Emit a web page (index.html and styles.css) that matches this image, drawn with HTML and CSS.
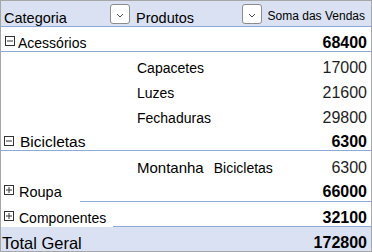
FILE: index.html
```html
<!DOCTYPE html>
<html lang="pt">
<head>
<meta charset="utf-8">
<title>Tabela dinâmica</title>
<link rel="stylesheet" href="styles.css">
</head>
<body>
<div class="pivot">
  <div class="row head line">
    <div class="hcell first">
      <span class="htitle">Categoria</span>
      <span class="dd"><svg width="8" height="5" viewBox="0 0 8 5"><path d="M1 1 L4 4 L7 1" fill="none" stroke="#4a4a4a" stroke-width="1"/></svg></span>
    </div>
    <div class="hcell">
      <span class="htitle">Produtos</span>
      <span class="dd"><svg width="8" height="5" viewBox="0 0 8 5"><path d="M1 1 L4 4 L7 1" fill="none" stroke="#4a4a4a" stroke-width="1"/></svg></span>
    </div>
    <div class="hcell">
      <span class="hsum">Soma das Vendas</span>
    </div>
  </div>

  <div class="row h24 line">
    <div class="label">
      <svg class="tog t-acc" width="10" height="10" viewBox="0 0 10 10"><rect x="0.5" y="0.5" width="9" height="9" fill="#fff" stroke="#333"/><path d="M2 5 H8" stroke="#333"/></svg>
      <span class="name n-acc">Acessórios</span>
    </div>
    <div></div>
    <div class="num b">68400</div>
  </div>

  <div class="row h25 pb1">
    <div></div>
    <div class="sub">Capacetes</div>
    <div class="num">17000</div>
  </div>
  <div class="row h25 pb1">
    <div></div>
    <div class="sub">Luzes</div>
    <div class="num">21600</div>
  </div>
  <div class="row h24">
    <div></div>
    <div class="sub">Fechaduras</div>
    <div class="num">29800</div>
  </div>

  <div class="row h24 line">
    <div class="label">
      <svg class="tog t-bic" width="10" height="10" viewBox="0 0 10 10"><rect x="0.5" y="0.5" width="9" height="9" fill="#fff" stroke="#333"/><path d="M2 5 H8" stroke="#333"/></svg>
      <span class="name n-bic">Bicicletas</span>
    </div>
    <div></div>
    <div class="num b">6300</div>
  </div>

  <div class="row h26 pb1">
    <div></div>
    <div class="sub"><span class="sub-a">Montanha</span><span class="sub-b">Bicicletas</span></div>
    <div class="num">6300</div>
  </div>

  <div class="row h24 line">
    <div class="label patch w-roupa">
      <svg class="tog t-rou" width="10" height="10" viewBox="0 0 10 10"><rect x="0.5" y="0.5" width="9" height="9" fill="#fff" stroke="#333"/><path d="M2 5 H8 M5 2 V8" stroke="#333"/></svg>
      <span class="name n-rou">Roupa</span>
    </div>
    <div></div>
    <div class="num b nb1">66000</div>
  </div>

  <div class="row h24 line">
    <div class="label patch w-comp">
      <svg class="tog t-com" width="10" height="10" viewBox="0 0 10 10"><rect x="0.5" y="0.5" width="9" height="9" fill="#fff" stroke="#333"/><path d="M2 5 H8 M5 2 V8" stroke="#333"/></svg>
      <span class="name n-com">Componentes</span>
    </div>
    <div></div>
    <div class="num b">32100</div>
  </div>

  <div class="row h24 total">
    <div class="label"><span class="name n-tot">Total Geral</span></div>
    <div></div>
    <div class="num b">172800</div>
  </div>
</div>
</body>
</html>
```

FILE: styles.css
```css
body {
  margin: 0;
  font-family: "Liberation Sans", Arial, sans-serif;
  color: #000;
}

.pivot {
  width: 370px;
  border: 1px solid #a6a6a6;
  background: #fff;
}

.row {
  display: grid;
  grid-template-columns: 135px 1fr auto;
  align-items: end;
  line-height: 16px;
}

.line {
  border-bottom: 1px solid #8ea9db;
}

.h24 { height: 24px; }
.h25 { height: 25px; }
.h26 { height: 26px; }

.head {
  height: 25px;
  background: #d9e1f2;
}

.hcell {
  display: flex;
  align-items: flex-end;
  align-self: stretch;
  font-size: 14.5px;
}

.hcell.first {
  padding-left: 3px;
}

.dd {
  margin-left: auto;
  align-self: flex-start;
  margin-top: 3px;
  width: 20px;
  height: 20px;
  box-sizing: border-box;
  border: 1px solid #8c8c8c;
  border-radius: 3px;
  background: #fff;
  display: flex;
  align-items: center;
  justify-content: center;
  padding-top: 2px;
}

.hcell.first .dd {
  margin-right: 6px;
}

.hsum {
  font-size: 12px;
  padding: 0 6px 2px 6px;
}

.label {
  display: flex;
  align-items: flex-end;
  align-self: stretch;
}

.patch {
  background: #fff;
  margin-bottom: -1px;
  padding-bottom: 1px;
  position: relative;
}

.w-roupa { width: 79px; }
.w-comp { width: 112px; }

.tog { flex: none; }
.t-acc { margin-left: 4px; margin-bottom: 5px; }
.t-bic { margin-left: 3px; margin-bottom: 4px; }
.t-rou { margin-left: 3px; margin-bottom: 6px; }
.t-com { margin-left: 3px; margin-bottom: 5px; }

.n-acc { font-size: 14px; margin-left: 3px; }
.n-bic { font-size: 15.5px; margin-left: 6px; }
.n-rou { font-size: 14.5px; margin-left: 5px; margin-bottom: 1px; }
.n-com { font-size: 14px; margin-left: 5px; }
.n-tot { font-size: 16.5px; margin-left: 1px; }

.pb1 { padding-bottom: 1px; box-sizing: border-box; }

.sub {
  font-size: 14px;
  padding-left: 1px;
}

.sub-a { font-size: 15px; }
.sub-b { margin-left: 10px; }

.num {
  font-size: 16px;
  padding-right: 4px;
  text-align: right;
  color: #1e1e1e;
}

.num.b {
  font-weight: bold;
  color: #000;
}

.nb1 { padding-bottom: 1px; }

.total {
  background: #d9e1f2;
}
```
